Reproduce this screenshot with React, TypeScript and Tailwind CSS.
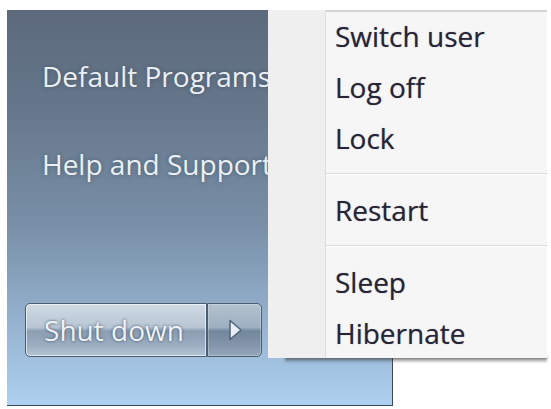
import React from "react";

const font = { fontFamily: '"Open Sans", "Noto Sans", sans-serif' };

function MenuItem({ label }: { label: string }) {
  return (
    <div className="flex h-[51px] items-center">
      <div className="h-full w-[58px] shrink-0 border-r border-[#dedede] bg-[#efefef]" />
      <div className="flex h-full flex-1 items-center pl-[9px] text-[28px] leading-[40px] text-[#272535] [font-weight:500] [text-shadow:0_0_1px_rgba(40,35,60,0.5)]">
        {label}
      </div>
    </div>
  );
}

function Separator() {
  return (
    <div className="flex h-[21px]">
      <div className="h-full w-[58px] shrink-0 border-r border-[#dedede] bg-[#efefef]" />
      <div className="flex flex-1 flex-col pt-[10px]">
        <div className="h-px bg-[#dadada]" />
        <div className="h-px bg-white" />
      </div>
    </div>
  );
}

export default function App() {
  return (
    <div className="relative h-[409px] w-[551px] overflow-hidden bg-white" style={font}>
      {/* Start menu panel */}
      <div className="ml-[7px] mt-[10px] flex h-[396px] w-[386px] flex-col border-r border-b border-[#3c4854] bg-[linear-gradient(to_bottom,#5c6a7c_0%,#66778b_25%,#7990a8_55%,#93b0cd_78%,#aed1f1_100%)] pl-[35px] pt-[46px]">
        <div className="flex flex-col gap-[48px] whitespace-nowrap text-[28px] leading-[40px] text-[#eaeff4] [text-shadow:0_0_4px_rgba(40,55,70,0.5)]">
          <div>Default Programs</div>
          <div>Help and Support</div>
        </div>

        {/* Shut down button */}
        <div className="ml-[-17px] mt-[119px] flex h-[54px] w-[237px]">
          <div className="flex w-[182px] items-center justify-center rounded-l-[5px] border border-[#4b5e73] bg-[linear-gradient(to_bottom,#d0dae4_0%,#b8c6d4_45%,#8a9db1_52%,#9cafc2_80%,#b3c4d4_100%)] pr-[4px] text-[28px] leading-[40px] text-[#eef2f6] shadow-[inset_0_0_0_1px_rgba(255,255,255,0.6)] [text-shadow:0_0_3px_rgba(40,55,75,0.85)]">
            Shut down
          </div>
          <div className="flex flex-1 items-center justify-center rounded-r-[5px] border border-[#4b5e73] bg-[linear-gradient(to_bottom,#b4c2cf_0%,#9dafc0_45%,#73879c_52%,#8396aa_80%,#95a8bb_100%)] shadow-[inset_0_0_0_1px_rgba(255,255,255,0.25)]">
            <svg width="16" height="24" viewBox="0 0 16 24">
              <path d="M3 2.5 L14 12 L3 21.5 Z" fill="#e8eef4" stroke="#50637a" strokeWidth="1.5" strokeLinejoin="round" />
            </svg>
          </div>
        </div>
      </div>

      {/* Popup menu shadow */}
      <div className="absolute left-[285px] top-[356px] h-[7px] w-[262px] bg-[linear-gradient(to_bottom,rgba(55,55,55,0.9),rgba(120,120,120,0))] blur-[1px]" />

      {/* Popup menu */}
      <div className="absolute left-[268px] top-[10px] flex w-[279px] flex-col bg-[#f6f6f6] whitespace-nowrap">
        <div className="flex h-[2px]">
          <div className="w-[58px] shrink-0 bg-[#efefef]" />
          <div className="flex-1 bg-[#d4d4d4]" />
        </div>
        <div className="-mt-[2px] flex flex-col">
          <MenuItem label="Switch user" />
          <MenuItem label="Log off" />
          <MenuItem label="Lock" />
          <Separator />
          <MenuItem label="Restart" />
          <Separator />
          <MenuItem label="Sleep" />
          <MenuItem label="Hibernate" />
        </div>
      </div>
    </div>
  );
}
